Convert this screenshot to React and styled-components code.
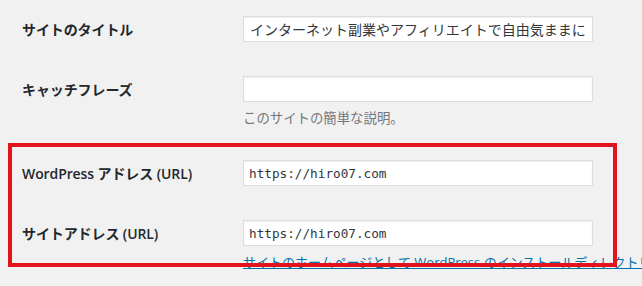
import styled, { createGlobalStyle } from "styled-components";

const GlobalStyle = createGlobalStyle`
  html, body {
    margin: 0;
    padding: 0;
    background: #f1f1f1;
    overflow: hidden;
  }
  body {
    font-family: "Open Sans", "Noto Sans CJK JP", sans-serif;
    color: #23282d;
  }
`;

const Page = styled.div`
  width: 642px;
  height: 286px;
  padding-left: 22px;
  box-sizing: border-box;
  overflow: hidden;
`;

const Row = styled.div`
  display: grid;
  grid-template-columns: 221px 1fr;
  padding: 16px 0 17px;
`;

const Label = styled.label`
  font-size: 14px;
  font-weight: 600;
  line-height: 26px;
  padding-top: 1px;
  letter-spacing: -0.1px;
  white-space: nowrap;
`;

const Field = styled.div`
  display: flex;
  flex-direction: column;
  min-width: 0;
`;

const TextInput = styled.input`
  width: 350px;
  height: 26px;
  box-sizing: border-box;
  margin: 0;
  padding: 0 6px;
  border: 1px solid #ddd;
  border-radius: 0;
  background: #fff;
  box-shadow: inset 0 1px 2px rgba(0, 0, 0, 0.07);
  color: #32373c;
  outline: none;
  font-family: ${(p) =>
    p.$mono
      ? `"DejaVu Sans Mono", "Liberation Mono", monospace`
      : `"Noto Sans CJK JP", sans-serif`};
  font-size: ${(p) => (p.$mono ? "12.7px" : "14px")};
  padding-left: ${(p) => (p.$mono ? "5px" : "6px")};
`;

const Description = styled.p`
  margin: 5px 0 0;
  font-family: "Noto Sans CJK JP", sans-serif;
  font-size: 13.4px;
  line-height: 20px;
  color: #72777c;
  white-space: nowrap;
`;

const HelpLink = styled.a`
  display: block;
  margin-top: 6px;
  font-family: "Open Sans", "Noto Sans CJK JP", sans-serif;
  font-size: 13px;
  line-height: 20px;
  color: #0073aa;
  text-decoration: underline;
  white-space: nowrap;
`;

const Highlight = styled.div`
  position: relative;
`;

const RedFrame = styled.div`
  position: absolute;
  left: -14px;
  top: -1px;
  width: 609px;
  height: 124px;
  box-sizing: border-box;
  border: 4px solid #e3131d;
  pointer-events: none;
`;

export default function App() {
  return (
    <>
      <GlobalStyle />
      <Page>
        <Row>
          <Label>サイトのタイトル</Label>
          <Field>
            <TextInput
              readOnly
              value="インターネット副業やアフィリエイトで自由気ままに生きる"
            />
          </Field>
        </Row>
        <Row>
          <Label>キャッチフレーズ</Label>
          <Field>
            <TextInput readOnly value="" />
            <Description>このサイトの簡単な説明。</Description>
          </Field>
        </Row>
        <Highlight>
          <Row>
            <Label>WordPress アドレス (URL)</Label>
            <Field>
              <TextInput $mono readOnly value="https://hiro07.com" />
            </Field>
          </Row>
          <Row>
            <Label>サイトアドレス (URL)</Label>
            <Field>
              <TextInput $mono readOnly value="https://hiro07.com" />
              <HelpLink href="#">
                サイトのホームページとして WordPress のインストールディレクトリとは異なる場所を使う場合は、ここにアドレスを入力してください。
              </HelpLink>
            </Field>
          </Row>
          <RedFrame />
        </Highlight>
      </Page>
    </>
  );
}
